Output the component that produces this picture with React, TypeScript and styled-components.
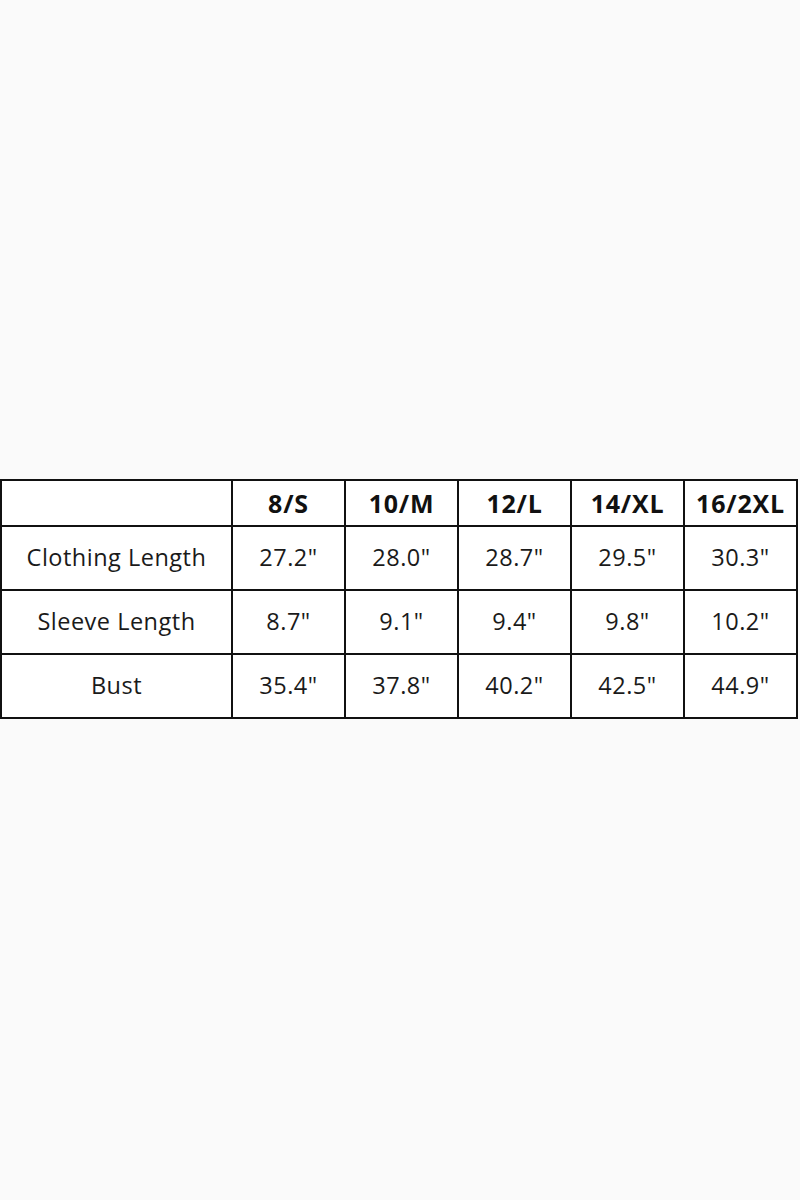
import React from "react";
import styled, { createGlobalStyle } from "styled-components";

const Global = createGlobalStyle`
  html, body { margin: 0; padding: 0; background: #fafafa; }
  body { font-family: "Open Sans", "Noto Sans", sans-serif; }
`;

const Page = styled.div`
  width: 800px;
  height: 1200px;
  padding-top: 479px;
  box-sizing: border-box;
  background: #fafafa;
`;

const Table = styled.table`
  border-collapse: collapse;
  background: #ffffff;
  width: 798px;
  table-layout: fixed;
  color: #111;
`;

const Th = styled.th`
  border: 2px solid #111;
  height: 44px;
  padding: 0;
  font-size: 25px;
  letter-spacing: 0.8px;
  font-weight: 700;
  text-align: center;
  line-height: 1;
`;

const Td = styled.td`
  border: 2px solid #111;
  height: 62px;
  padding: 0;
  font-size: 23.5px;
  letter-spacing: 0.5px;
  font-weight: 400;
  text-align: center;
  line-height: 1;
  color: #1a1a1a;
`;

const sizes = ["8/S", "10/M", "12/L", "14/XL", "16/2XL"];
const rows: { label: string; values: string[] }[] = [
  { label: "Clothing Length", values: ['27.2"', '28.0"', '28.7"', '29.5"', '30.3"'] },
  { label: "Sleeve Length", values: ['8.7"', '9.1"', '9.4"', '9.8"', '10.2"'] },
  { label: "Bust", values: ['35.4"', '37.8"', '40.2"', '42.5"', '44.9"'] },
];

export default function App() {
  return (
    <Page>
      <Global />
      <Table>
        <colgroup>
          <col style={{ width: 231 }} />
          {sizes.map((s) => (
            <col key={s} style={{ width: 113 }} />
          ))}
        </colgroup>
        <thead>
          <tr>
            <Th />
            {sizes.map((s) => (
              <Th key={s}>{s}</Th>
            ))}
          </tr>
        </thead>
        <tbody>
          {rows.map((r) => (
            <tr key={r.label}>
              <Td>{r.label}</Td>
              {r.values.map((v, i) => (
                <Td key={i}>{v}</Td>
              ))}
            </tr>
          ))}
        </tbody>
      </Table>
    </Page>
  );
}
